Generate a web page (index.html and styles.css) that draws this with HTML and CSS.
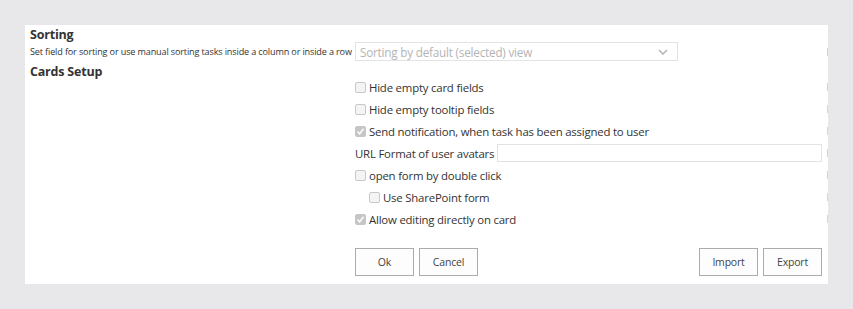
FILE: index.html
```html
<!DOCTYPE html>
<html>
<head>
<meta charset="utf-8">
<link rel="stylesheet" href="styles.css">
</head>
<body>
<div class="panel">
  <div class="row r-title">
    <div class="heading">Sorting</div><div></div><div></div>
  </div>
  <div class="row r-sort">
    <div class="desc">Set field for sorting or use manual sorting tasks inside a column or inside a row</div>
    <div class="cell"><div class="select"><span>Sorting by default (selected) view</span>
      <svg class="chev" width="10" height="6" viewBox="0 0 10 6"><path d="M1 1 L5 5 L9 1" fill="none" stroke="#b5b5b5" stroke-width="1.6"/></svg></div></div>
    <div class="tick"></div>
  </div>
  <div class="row r-head2">
    <div class="heading h2">Cards Setup</div><div></div><div></div>
  </div>
  <div class="row r-opt">
    <div></div><label class="cb"><span class="box"></span>Hide empty card fields</label><div class="tick"></div>
  </div>
  <div class="row r-opt">
    <div></div><label class="cb"><span class="box"></span>Hide empty tooltip fields</label><div class="tick"></div>
  </div>
  <div class="row r-opt">
    <div></div><label class="cb"><span class="box checked"><svg width="9" height="9" viewBox="0 0 9 9"><path d="M1.5 4.5 L3.6 6.8 L7.6 1.8" fill="none" stroke="#fff" stroke-width="1.4"/></svg></span>Send notification, when task has been assigned to user</label><div class="tick"></div>
  </div>
  <div class="row r-opt">
    <div></div><div class="url"><span>URL Format of user avatars</span><div class="input"></div></div><div class="tick"></div>
  </div>
  <div class="row r-opt">
    <div></div><label class="cb"><span class="box"></span>open form by double click</label><div class="tick"></div>
  </div>
  <div class="row r-opt">
    <div></div><label class="cb indent"><span class="box"></span>Use SharePoint form</label><div class="tick"></div>
  </div>
  <div class="row r-opt">
    <div></div><label class="cb"><span class="box checked"><svg width="9" height="9" viewBox="0 0 9 9"><path d="M1.5 4.5 L3.6 6.8 L7.6 1.8" fill="none" stroke="#fff" stroke-width="1.4"/></svg></span>Allow editing directly on card</label><div class="tick"></div>
  </div>
  <div class="row r-buttons">
    <div></div>
    <div class="buttons">
      <div class="group"><button class="btn">Ok</button><button class="btn">Cancel</button></div>
      <div class="group"><button class="btn">Import</button><button class="btn">Export</button></div>
    </div>
    <div></div>
  </div>
</div>
</body>
</html>
```
FILE: styles.css
```css
html, body {
  margin: 0;
  padding: 0;
  background: #e8e8ea;
  width: 853px;
  height: 309px;
  overflow: hidden;
  font-family: "Open Sans", "Noto Sans", sans-serif;
  color: #333;
}
.panel {
  margin: 25px 0 0 25px;
  width: 803px;
  height: 259px;
  background: #fff;
  box-sizing: border-box;
  padding: 2px 0 0 5px;
}
.row {
  display: grid;
  grid-template-columns: 325px 467px 6px;
  align-items: center;
}
.r-title { height: 15px; }
.r-sort { height: 14px; }
.r-head2 { height: 20px; }
.r-opt { height: 22px; }
.r-buttons { height: 54px; align-items: end; }
.heading {
  font-size: 12.5px;
  line-height: 16px;
  font-weight: 700;
  letter-spacing: -0.2px;
  white-space: nowrap;
  color: #333;
}
.heading.h2 {
  align-self: end;
  margin-bottom: -4px;
}
.desc {
  font-size: 9.1px;
  white-space: nowrap;
  letter-spacing: -0.15px;
}
.select {
  width: 323px;
  height: 19px;
  box-sizing: border-box;
  border: 1px solid #e3e3e3;
  display: flex;
  align-items: center;
  justify-content: space-between;
  padding: 0 9px 0 4px;
  font-size: 11.7px;
  color: #b4b4b4;
  letter-spacing: -0.2px;
  white-space: nowrap;
}
.chev { margin-top: 1px; }
.tick {
  width: 1px;
  height: 8px;
  background: #d4d4d4;
  margin-left: 5px;
}
.cb {
  display: flex;
  align-items: center;
  font-size: 11.4px;
  color: #333;
  letter-spacing: -0.2px;
  white-space: nowrap;
}
.cb.indent { padding-left: 14px; }
.box {
  width: 11px;
  height: 11px;
  box-sizing: border-box;
  border: 1px solid #c8c8c8;
  border-radius: 2px;
  background: #f4f4f4;
  margin-right: 3px;
  display: flex;
  align-items: center;
  justify-content: center;
}
.box.checked {
  background: #c6c6c6;
  border-color: #c6c6c6;
}
.url {
  display: flex;
  align-items: center;
  font-size: 11.4px;
  letter-spacing: -0.2px;
  white-space: nowrap;
}
.url span { margin-right: 3px; }
.input {
  flex: 1;
  height: 18px;
  border: 1px solid #e3e3e3;
  box-sizing: border-box;
}
.buttons {
  display: flex;
  justify-content: space-between;
  padding-bottom: 8px;
}
.group { display: flex; gap: 5px; }
.btn {
  width: 59px;
  height: 28px;
  border: 1px solid #ababab;
  background: #fdfdfd;
  font-family: "Open Sans", "Noto Sans", sans-serif;
  font-size: 10.5px;
  color: #444;
  padding: 0;
  letter-spacing: -0.2px;
}
```
